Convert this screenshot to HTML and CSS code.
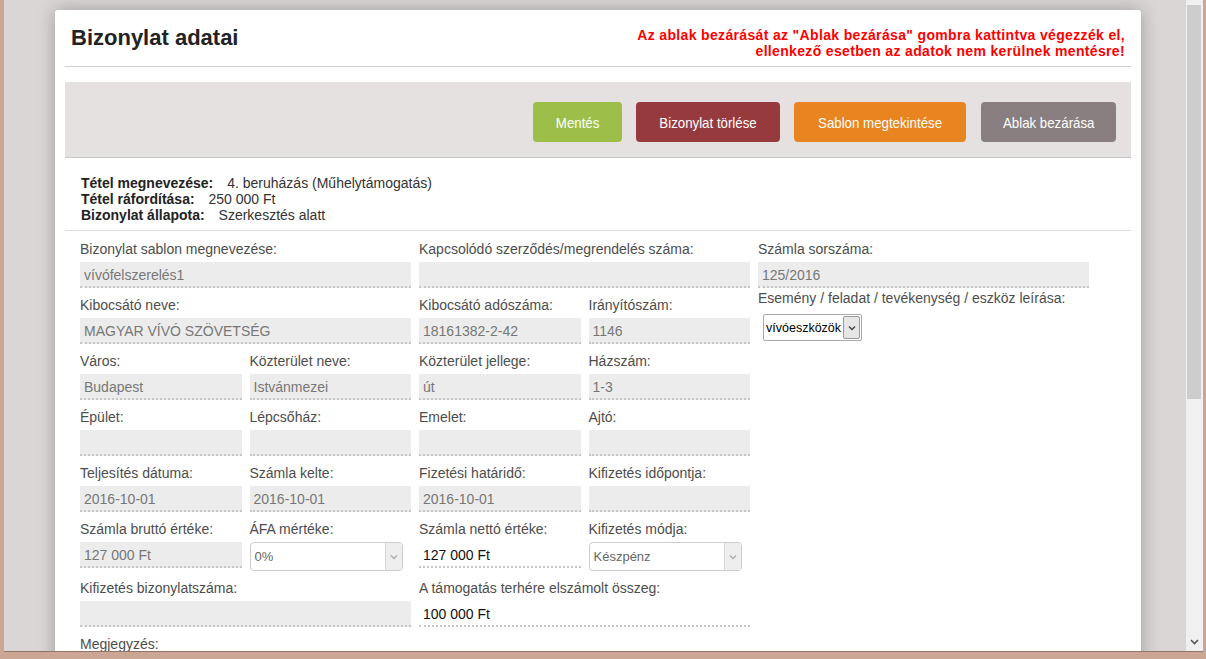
FILE: index.html
```html
<!DOCTYPE html>
<html lang="hu">
<head>
<meta charset="utf-8">
<title>Bizonylat adatai</title>
<link rel="stylesheet" href="styles.css">
</head>
<body>
<div class="screen">
  <div class="viewport">
    <div class="modal">
      <div class="head">
        <h1 class="title">Bizonylat adatai</h1>
        <p class="warn">Az ablak bezárását az "Ablak bezárása" gombra kattintva végezzék el,<br>ellenkező esetben az adatok nem kerülnek mentésre!</p>
      </div>
      <div class="toolbar">
        <button class="btn btn-green"><span>Mentés</span></button>
        <button class="btn btn-red"><span>Bizonylat törlése</span></button>
        <button class="btn btn-orange"><span>Sablon megtekintése</span></button>
        <button class="btn btn-grey"><span>Ablak bezárása</span></button>
      </div>
      <div class="info">
        <div><b class="ik">Tétel megnevezése:</b> 4. beruházás (Műhelytámogatás)</div>
        <div><b class="ik">Tétel ráfordítása:</b> 250 000 Ft</div>
        <div><b class="ik">Bizonylat állapota:</b> Szerkesztés alatt</div>
      </div>
      <div class="form">
        <div class="cell span2"><div class="lbl">Bizonylat sablon megnevezése:</div><div class="fld">vívófelszerelés1</div></div>
        <div class="cell span2"><div class="lbl">Kapcsolódó szerződés/megrendelés száma:</div><div class="fld"></div></div>
        <div class="cell span2"><div class="lbl">Számla sorszáma:</div><div class="fld">125/2016</div></div>

        <div class="cell span2"><div class="lbl">Kibocsátó neve:</div><div class="fld">MAGYAR VÍVÓ SZÖVETSÉG</div></div>
        <div class="cell"><div class="lbl">Kibocsátó adószáma:</div><div class="fld">18161382-2-42</div></div>
        <div class="cell"><div class="lbl">Irányítószám:</div><div class="fld">1146</div></div>
        <div class="cell span2 rows-3">
          <div class="lbl lbl-tight">Esemény / feladat / tevékenység / eszköz leírása:</div>
          <div class="sel-native"><span>vívóeszközök</span><span class="nat-arr"><svg width="8" height="6" viewBox="0 0 8 6"><path d="M1 1.5 L4 4.5 L7 1.5" fill="none" stroke="#444" stroke-width="1.4"/></svg></span></div>
        </div>

        <div class="cell"><div class="lbl">Város:</div><div class="fld">Budapest</div></div>
        <div class="cell"><div class="lbl">Közterület neve:</div><div class="fld">Istvánmezei</div></div>
        <div class="cell"><div class="lbl">Közterület jellege:</div><div class="fld">út</div></div>
        <div class="cell"><div class="lbl">Házszám:</div><div class="fld">1-3</div></div>

        <div class="cell"><div class="lbl">Épület:</div><div class="fld"></div></div>
        <div class="cell"><div class="lbl">Lépcsőház:</div><div class="fld"></div></div>
        <div class="cell"><div class="lbl">Emelet:</div><div class="fld"></div></div>
        <div class="cell"><div class="lbl">Ajtó:</div><div class="fld"></div></div>

        <div class="cell"><div class="lbl">Teljesítés dátuma:</div><div class="fld">2016-10-01</div></div>
        <div class="cell"><div class="lbl">Számla kelte:</div><div class="fld">2016-10-01</div></div>
        <div class="cell"><div class="lbl">Fizetési határidő:</div><div class="fld">2016-10-01</div></div>
        <div class="cell col4"><div class="lbl">Kifizetés időpontja:</div><div class="fld"></div></div>

        <div class="cell col1"><div class="lbl">Számla bruttó értéke:</div><div class="fld">127 000 Ft</div></div>
        <div class="cell"><div class="lbl">ÁFA mértéke:</div><div class="sel"><span>0%</span><span class="arr"><svg width="8" height="6" viewBox="0 0 8 6"><path d="M1 1.5 L4 4.5 L7 1.5" fill="none" stroke="#aaa" stroke-width="1.3"/></svg></span></div></div>
        <div class="cell"><div class="lbl">Számla nettó értéke:</div><div class="fld fld-white">127 000 Ft</div></div>
        <div class="cell col4"><div class="lbl">Kifizetés módja:</div><div class="sel"><span>Készpénz</span><span class="arr"><svg width="8" height="6" viewBox="0 0 8 6"><path d="M1 1.5 L4 4.5 L7 1.5" fill="none" stroke="#aaa" stroke-width="1.3"/></svg></span></div></div>

        <div class="cell wide-first"><div class="lbl">Kifizetés bizonylatszáma:</div><div class="fld"></div></div>
        <div class="cell span2"><div class="lbl">A támogatás terhére elszámolt összeg:</div><div class="fld fld-white">100 000 Ft</div></div>

        <div class="cell wide-first"><div class="lbl">Megjegyzés:</div><div class="fld"></div></div>
      </div>
    </div>
  </div>
  <div class="scrollbar">
    <div class="thumb"></div>
    <div class="sb-down"><svg width="9" height="6" viewBox="0 0 9 6"><path d="M1 1 L4.5 4.5 L8 1" fill="none" stroke="#555" stroke-width="1.6"/></svg></div>
  </div>
</div>
</body>
</html>
```

FILE: styles.css
```css
* { box-sizing: border-box; }
html, body { margin: 0; padding: 0; }
body {
  background: #cba694;
  width: 1206px;
  height: 659px;
  overflow: hidden;
  font-family: "Liberation Sans", Arial, sans-serif;
  font-size: 14px;
}
.screen {
  display: flex;
  height: 652px;
  margin-left: 4px;
  width: 1199px;
  border-bottom: 1px solid #8f7468;
}
.viewport {
  flex: 1;
  background: #dad6d6;
  overflow: hidden;
  padding: 10px 0 0 51px;
}
.modal {
  width: 1086px;
  background: #fff;
  border-radius: 3px 3px 0 0;
  box-shadow: 0 0 18px rgba(0,0,0,0.28);
  padding: 0 10px;
  height: 800px;
}
.head {
  display: flex;
  justify-content: space-between;
  align-items: flex-start;
  height: 57px;
  border-bottom: 1px solid #cfcfcf;
}
.title {
  margin: 15px 0 0 6px;
  font-size: 22px;
  line-height: 26px;
  font-weight: bold;
  color: #222;
}
.warn {
  margin: 17px 6px 0 0;
  text-align: right;
  color: #ff0000;
  font-weight: bold;
  font-size: 14px;
  line-height: 16px;
  letter-spacing: 0.34px;
}
.toolbar {
  margin-top: 15px;
  background: #e5e1e0;
  height: 76px;
  border-bottom: 1px solid #c8c6c6;
  display: flex;
  justify-content: flex-end;
  align-items: flex-start;
  gap: 14px;
  padding: 20px 15px 0 0;
}
.btn {
  height: 40px;
  border: none;
  border-radius: 4px;
  color: #fff;
  font-family: "Liberation Sans", Arial, sans-serif;
  font-size: 15px;
  padding: 0;
  white-space: nowrap;
  display: flex;
  align-items: center;
  justify-content: center;
  overflow: hidden;
}
.btn span { display: inline-block; transform: scaleX(0.885); }
.btn-green { background: #9dbf4a; width: 89px; }
.btn-red { background: #963a3e; width: 144px; }
.btn-orange { background: #e88520; width: 172px; }
.btn-grey { background: #8a7f80; width: 135px; margin-left: 1px; }
.info {
  padding: 17px 16px 7px;
  line-height: 16px;
  color: #333;
  border-bottom: 1px solid #dcdcdc;
}
.ik { color: #222; margin-right: 10px; }
.form {
  padding: 1px 0 0 15px;
  display: grid;
  grid-template-columns: repeat(6, 161.5px);
  column-gap: 8px;
}
.cell { display: flex; flex-direction: column; }
.span2 { grid-column: span 2; }
.col1 { grid-column-start: 1; }
.col4 { grid-column-start: 4; }
.wide-first { grid-column: 1 / span 2; }
.rows-3 { grid-row: span 5; }
.lbl {
  padding-top: 9px;
  line-height: 17px;
  margin-bottom: 4px;
  color: #4d4d4d;
  white-space: nowrap;
}
.lbl-tight { padding-top: 2px; margin-bottom: 7px; }
.fld {
  height: 26px;
  background: #ececec;
  border-bottom: 2px dotted #c6c6c6;
  padding: 0 4px;
  line-height: 26px;
  color: #777;
}
.fld-white { background: #fff; color: #111; }
.sel {
  width: 153px;
  height: 29px;
  border: 1px solid #cdcdcd;
  border-radius: 4px;
  display: flex;
  align-items: stretch;
  font-size: 13px;
  color: #666;
}
.sel span:first-child { padding-left: 4px; align-self: center; }
.sel .arr {
  margin-left: auto;
  width: 17px;
  background: #eee;
  border-left: 1px solid #d6d6d6;
  border-radius: 0 3px 3px 0;
  display: flex;
  align-items: center;
  justify-content: center;
}
.sel-native {
  margin-left: 5px;
  width: 99px;
  height: 27px;
  border: 1px solid #aaa;
  border-radius: 2px;
  display: flex;
  align-items: stretch;
  font-size: 12.5px;
  color: #000;
}
.sel-native span:first-child { padding-left: 2px; align-self: center; white-space: nowrap; }
.nat-arr {
  width: 17px;
  flex: none;
  margin: 1px 1px 1px auto;
  background: #e6e6e6;
  border: 1px solid #999;
  border-radius: 2px;
  display: flex;
  align-items: center;
  justify-content: center;
}
.scrollbar {
  width: 17px;
  background: #f0f0f0;
  display: flex;
  flex-direction: column;
}
.thumb {
  margin: 5px 2px 0 1px;
  height: 394px;
  background: #cdcdcd;
}
.sb-down {
  margin-top: auto;
  height: 17px;
  display: flex;
  align-items: center;
  justify-content: center;
  padding-bottom: 2px;
}
```
